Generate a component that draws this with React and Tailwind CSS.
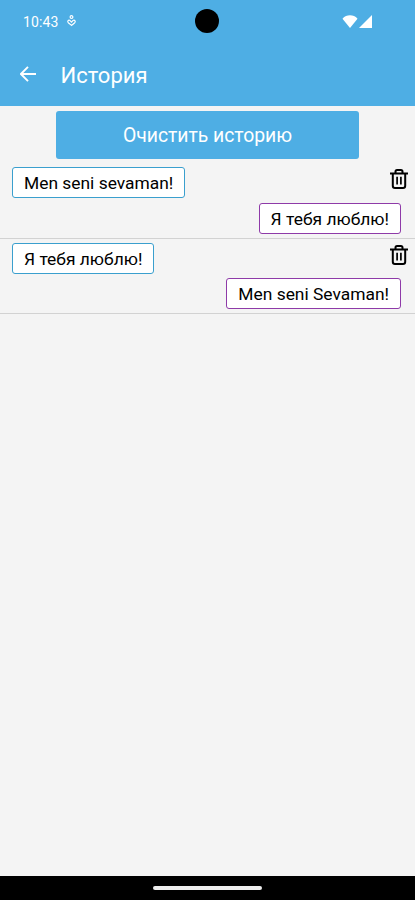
const history = [
    { id: 1, source: "Men seni sevaman!", result: "Я тебя люблю!" },
    { id: 2, source: "Я тебя люблю!", result: "Men seni Sevaman!" },
];

function StatusBar() {
    return (
        <div className="relative flex h-[42px] items-center justify-between pl-[23px] pr-[43px]">
            <div className="flex items-center gap-[9px]">
                <span className="pt-[1px] text-[14px] leading-none tracking-[0.1px]">10:43</span>

                <svg width="9" height="12" viewBox="0 0 9 12" fill="none" stroke="currentColor" strokeWidth="1.2">
                    <circle cx="4.5" cy="2.1" r="1.4" />
                    <path d="M4.5 10.4 1.3 7.7C.4 6.7.8 5.3 2 5.2c1.1-.1 1.7 1 2.5 1.9C5.3 6.2 5.9 5.1 7 5.2c1.2.1 1.6 1.5.7 2.5z" />
                </svg>
            </div>

            <div className="absolute left-[195px] top-[9px] size-6 rounded-full bg-black" />

            <div className="flex items-center gap-[1px]">
                <svg width="16" height="13" viewBox="0 0 16 13" fill="currentColor">
                    <path d="M8 13 .5 3.7C2.6 1.3 5.2.3 8 .3s5.4 1 7.5 3.4z" />
                </svg>
                <svg width="13" height="13" viewBox="0 0 13 13" fill="currentColor">
                    <path d="M13 0v13H0z" />
                </svg>
            </div>
        </div>
    );
}

function Header({ title }) {
    return (
        <div className="flex h-16 items-center pl-[19.5px]">
            <button aria-label="Назад" className="mr-[25px]">
                <svg width="16" height="16" viewBox="0 0 16 16" fill="none" stroke="currentColor" strokeWidth="1.9">
                    <path d="M16 8H1.5M8 .8.9 8 8 15.2" />
                </svg>
            </button>

            <h1 className="pt-[3px] text-[22px] leading-none">{title}</h1>
        </div>
    );
}

function TrashIcon() {
    return (
        <svg width="18" height="20" viewBox="0 0 18 20" fill="none" stroke="currentColor" strokeWidth="2">
            <path d="M0 4.5h18" />
            <path d="M5.5 4.5V2.6Q5.5 1 7.1 1h3.8q1.6 0 1.6 1.6V4.5" />
            <path d="M2.8 4.5v12.3Q2.8 19 5 19h8q2.2 0 2.2-2.2V4.5" />
            <path d="M7.1 7.7v7.8M10.9 7.7v7.8" strokeWidth="1.7" />
        </svg>
    );
}

function HistoryItem({ source, result }) {
    return (
        <li className="flex h-[75.5px] flex-col gap-[4.5px] border-b border-[#d2d2d2] pt-1">
            <div className="flex items-start justify-between pl-3 pr-[7.5px]">
                <p className="flex h-[31px] items-center rounded-[3px] border border-[#3a9fce] bg-white px-[11px] pt-[3px]">
                    {source}
                </p>

                <button aria-label="Удалить" className="mt-[2px]">
                    <TrashIcon />
                </button>
            </div>

            <p className="mr-[14px] flex h-[31px] items-center self-end rounded-[3px] border border-[#8e3aa8] bg-white px-[11px] pt-[3px]">
                {result}
            </p>
        </li>
    );
}

export default function App() {
    return (
        <div className="flex h-[900px] w-[415px] flex-col overflow-hidden bg-[#f4f4f4] font-['Roboto',sans-serif] text-black">
            <header className="h-[106px] shrink-0 bg-[#4eaee4] text-white">
                <StatusBar />
                <Header title="История" />
            </header>

            <main className="flex flex-1 flex-col pt-[4.5px]">
                <button className="h-12 w-[302.5px] self-center rounded-[3px] bg-[#4eaee4] pt-[3px] text-[19.4px] tracking-[-0.05px] text-white">
                    Очистить историю
                </button>

                <ul className="mt-[4.5px] text-[17.4px] leading-none">
                    {history.map((item) => (
                        <HistoryItem key={item.id} source={item.source} result={item.result} />
                    ))}
                </ul>
            </main>

            <footer className="flex h-6 shrink-0 items-center justify-center bg-black">
                <div className="h-1 w-[109px] rounded-full bg-[#eeeeee]" />
            </footer>
        </div>
    );
}
